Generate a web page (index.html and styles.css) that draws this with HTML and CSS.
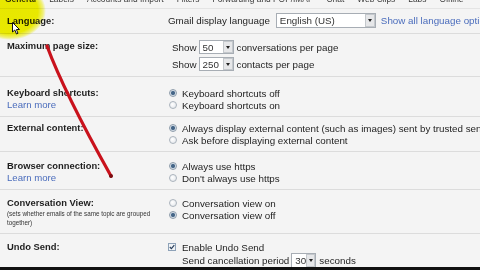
FILE: index.html
```html
<!DOCTYPE html>
<html lang="en">
<head>
  <meta charset="UTF-8">
  <title>Settings</title>
  <link rel="stylesheet" href="styles.css">
</head>
<body>
  <!-- Settings tabs (cut off at the top edge) -->
  <div class="tabs">
    <span class="tab current">General</span>
    <span class="tab">Labels</span>
    <span class="tab">Accounts and Import</span>
    <span class="tab">Filters</span>
    <span class="tab">Forwarding and POP/IMAP</span>
    <span class="tab">Chat</span>
    <span class="tab">Web Clips</span>
    <span class="tab">Labs</span>
    <span class="tab">Offline</span>
  </div>

  <div class="settings">
    <!-- Language -->
    <div class="row row-lang">
      <div class="label">Language:</div>
      <div class="value">
        <div class="line">
          Gmail display language
          <span class="select select-lang">English (US)<i class="arrow"></i></span>
          <a class="link">Show all language options</a>
        </div>
      </div>
    </div>

    <!-- Page size -->
    <div class="row row-size">
      <div class="label">Maximum page size:</div>
      <div class="value indent">
        <div class="line line-select">Show <span class="select select-num">50<i class="arrow"></i></span> conversations per page</div>
        <div class="line line-select">Show <span class="select select-num">250<i class="arrow"></i></span> contacts per page</div>
      </div>
    </div>

    <!-- Keyboard shortcuts -->
    <div class="row row-keys">
      <div class="label">Keyboard shortcuts:<a class="link learn">Learn more</a></div>
      <div class="value">
        <div class="line"><span class="radio on"></span>Keyboard shortcuts off</div>
        <div class="line"><span class="radio"></span>Keyboard shortcuts on</div>
      </div>
    </div>

    <!-- External content -->
    <div class="row row-ext">
      <div class="label">External content:</div>
      <div class="value">
        <div class="line"><span class="radio on"></span>Always display external content (such as images) sent by trusted senders</div>
        <div class="line"><span class="radio"></span>Ask before displaying external content</div>
      </div>
    </div>

    <!-- Browser connection -->
    <div class="row row-https">
      <div class="label">Browser connection:<a class="link learn">Learn more</a></div>
      <div class="value">
        <div class="line"><span class="radio on"></span>Always use https</div>
        <div class="line"><span class="radio"></span>Don't always use https</div>
      </div>
    </div>

    <!-- Conversation view -->
    <div class="row row-conv">
      <div class="label">Conversation View:
        <span class="note">(sets whether emails of the same topic are grouped together)</span>
      </div>
      <div class="value">
        <div class="line"><span class="radio"></span>Conversation view on</div>
        <div class="line"><span class="radio on"></span>Conversation view off</div>
      </div>
    </div>

    <!-- Undo send -->
    <div class="row row-undo">
      <div class="label">Undo Send:</div>
      <div class="value">
        <div class="line">
          <span class="checkbox">
            <svg width="6" height="6" viewBox="0 0 6 6"><path d="M0.8 3 L2.4 4.6 L5.3 1.2" fill="none" stroke="#2a3f5c" stroke-width="1.2"/></svg>
          </span>Enable Undo Send
        </div>
        <div class="line line-period">Send cancellation period <span class="select select-sec">30<i class="arrow"></i></span> seconds</div>
      </div>
    </div>
  </div>

  <div class="frame-edge"></div>

  <!-- Video annotations: highlight, pen stroke and pointer -->
  <div class="highlight"></div>
  <svg class="pen" width="480" height="270" viewBox="0 0 480 270">
    <path d="M47 46 Q64 92 111 176" fill="none" stroke="#c9121c" stroke-width="3.2" stroke-linecap="round"/>
    <circle cx="111" cy="176" r="2" fill="#7a0c10"/>
  </svg>
  <svg class="pointer" width="9" height="13" viewBox="0 0 9 13">
    <path d="M0.5 0.5 L0.5 10 L2.8 8 L4.5 12 L6 11.3 L4.4 7.5 L7.5 7.5 Z" fill="#fff" stroke="#111" stroke-width="1"/>
  </svg>
</body>
</html>
```

FILE: styles.css
```css
/* General */
body {
  margin: 0;
  width: 480px;
  height: 270px;
  overflow: hidden;
  position: relative;
  display: flex;
  flex-direction: column;
  background-color: #f4f4f4;
  color: #1e1e1e;
  font-family: 'Liberation Sans', Arial, sans-serif;
  font-size: 9.8px;
}

a.link {
  color: #4a6cbc;
}

/* Tabs */
.tabs {
  height: 8px;
  flex: none;
  overflow: hidden;
  white-space: nowrap;
  display: flex;
  gap: 13px;
  padding-left: 5px;
  border-bottom: 1px solid #e4e4e4;
  font-size: 8.4px;
  color: #3a3a3a;
}

.tab {
  line-height: 12px;
  margin-top: -7px;
}

.tab.current {
  font-weight: bold;
}

/* Setting rows */
.settings {
  flex: 1;
}

.row {
  display: grid;
  grid-template-columns: 168px 1fr;
  border-top: 1px solid #dcdcdc;
  white-space: nowrap;
}

.tabs + .settings .row:first-child {
  border-top: none;
}

.label {
  padding-left: 7px;
  font-weight: bold;
  font-size: 9.4px;
  line-height: 12px;
  display: flex;
  flex-direction: column;
  align-items: flex-start;
}

.learn {
  font-weight: normal;
  font-size: 9.6px;
}

.note {
  font-weight: normal;
  font-size: 6.3px;
  line-height: 9px;
  white-space: normal;
  width: 152px;
  color: #333;
}

.value.indent {
  padding-left: 4px;
}

.line {
  height: 12px;
  display: flex;
  align-items: center;
}

.row-lang { padding: 4px 0 5px; }
.row-lang .label { line-height: 15px; }
.row-lang .line { height: 15px; }
.row-lang .select { margin: 0 5px 0 6px; }

.row-size { padding: 6px 0 5px; }
.line-select { height: 14px; margin-bottom: 3px; }
.line-select:last-child { margin-bottom: 0; }
.line-select .select { margin: 0 3px 0 2px; }

.row-keys { padding: 10px 0 5px; }
.row-ext { padding: 5px 0 5px; }
.row-https { padding: 8px 0 5px; }
.row-conv { padding: 7px 0 6px; }
.row-undo { padding: 7px 0 0; }

.line-period {
  height: 14px;
  padding-left: 14px;
}

.line-period .select { margin: 0 3px 0 2px; }

/* Form controls */
.radio {
  width: 8px;
  height: 8px;
  border-radius: 50%;
  border: 1px solid #aab3bc;
  box-sizing: border-box;
  background: radial-gradient(circle at 40% 40%, #ffffff, #dfe3e8);
  margin: 0 5px 0 1px;
  flex: none;
}

.radio.on {
  border-color: #8e9cab;
  background: radial-gradient(circle, #3f5f80 0, #4d6d8e 1.6px, #dce4ec 2.6px);
}

.checkbox {
  width: 8px;
  height: 8px;
  border: 1px solid #8ea2b8;
  box-sizing: border-box;
  background: #f0f3f6;
  margin-right: 6px;
  display: flex;
  align-items: center;
  justify-content: center;
  flex: none;
}

.checkbox svg {
  display: block;
}

.select {
  display: inline-flex;
  align-items: center;
  height: 14px;
  box-sizing: border-box;
  border: 1px solid #a7adb4;
  background: #fff;
  padding-left: 3px;
  color: #333;
  flex: none;
}

.select-lang { width: 100px; height: 15px; }
.select-num { width: 35px; }
.select-sec { width: 25px; height: 15px; }

.arrow {
  margin-left: auto;
  width: 10px;
  height: 100%;
  box-sizing: border-box;
  border: 1px solid #c4c8cc;
  background: #e6e7e9;
  display: flex;
  align-items: center;
  justify-content: center;
}

.arrow::after {
  content: '';
  border-left: 2.5px solid transparent;
  border-right: 2.5px solid transparent;
  border-top: 3px solid #222;
}

/* Frame bottom */
.frame-edge {
  height: 3px;
  flex: none;
  background: #111;
}

/* Annotations */
.highlight {
  position: absolute;
  left: -26px;
  top: -18px;
  width: 72px;
  height: 58px;
  border-radius: 50%;
  background: radial-gradient(closest-side, #f2f200 0, #f4f400 78%, rgba(246, 246, 0, 0.5) 92%, rgba(246, 246, 0, 0) 100%);
  mix-blend-mode: multiply;
}

.pen {
  position: absolute;
  left: 0;
  top: 0;
}

.pointer {
  position: absolute;
  left: 12px;
  top: 22px;
}
```
